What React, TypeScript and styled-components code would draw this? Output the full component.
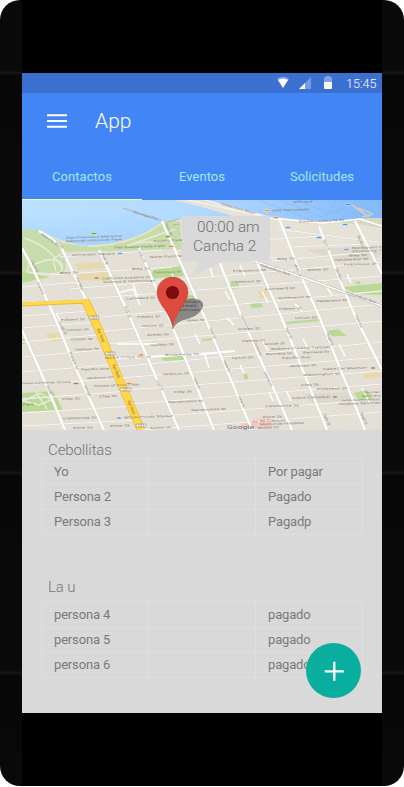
import React from "react";
import styled, { createGlobalStyle } from "styled-components";

const GlobalStyle = createGlobalStyle`
  body { margin: 0; background: #fff; font-family: Roboto, "Noto Sans", sans-serif; }
  * { box-sizing: border-box; }
`;

const Phone = styled.div`
  width: 404px;
  height: 786px;
  padding: 0 22px;
  border-radius: 20px;
  overflow: hidden;
  background: #080808 repeating-linear-gradient(#0a0a0a 0 71px, #151515 72px 74px, #070707 75px, #0a0a0a 200px);
`;

const Face = styled.div`
  height: 100%;
  padding-top: 73px;
  background: #000;
`;

const Screen = styled.main`
  position: relative;
  width: 360px;
  height: 640px;
  background: #d9d9d9;
`;

const StatusBar = styled.div`
  height: 20px;
  display: flex;
  justify-content: flex-end;
  align-items: center;
  padding-right: 5px;
  background: #3b70d1;
  color: #fff;
  font-size: 12.6px;
  font-weight: 300;
  line-height: 20px;
`;

const StatusIcons = styled.svg`
  width: 56px;
  height: 20px;
  margin-right: 13px;
`;

const Clock = styled.span`
  width: 31px;
  padding-top: 1px;
  white-space: nowrap;
`;

const Header = styled.header`
  height: 107px;
  display: flex;
  flex-direction: column;
  justify-content: space-between;
  background: #4285f5;
`;

const TitleBar = styled.div`
  height: 56px;
  display: flex;
  align-items: center;
  gap: 28px;
  padding-left: 25px;
`;

const MenuIcon = styled.svg`
  width: 20px;
  height: 14px;
`;

const AppTitle = styled.h1`
  margin: 0;
  color: #fff;
  font-size: 21px;
  font-weight: 300;
  line-height: 26px;
`;

const Tabs = styled.nav`
  display: grid;
  grid-template-columns: repeat(3, 120px);
`;

const Tab = styled.a<{ $active?: boolean }>`
  height: 47px;
  padding-top: 14px;
  border-bottom: 1px solid ${(p) => (p.$active ? "#f4f9b8" : "transparent")};
  color: #a4e5f8;
  font-size: 13px;
  line-height: 19px;
  letter-spacing: 0.04px;
  text-align: center;
`;

const MapArea = styled.section`
  position: relative;
  height: 230px;
  overflow: hidden;
`;

const MapDrawing = styled.svg`
  display: block;
  width: 360px;
  height: 230px;
`;

const Callout = styled.div`
  position: absolute;
  left: 160px;
  top: 16px;
  width: 88px;
  height: 45px;
  display: flex;
  flex-direction: column;
  color: #6f6f6f;
  font-size: 15.3px;
  font-weight: 300;
  line-height: 19px;
  padding-top: 2px;
  white-space: nowrap;
`;

const CalloutLine = styled.span<{ $indent: number }>`
  padding-left: ${(p) => p.$indent}px;
`;

const Group = styled.section<{ $height: number; $gap: number }>`
  height: ${(p) => p.$height}px;
  padding: 12px 19px 0;

  h2 { margin-bottom: ${(p) => p.$gap}px; }
`;

const GroupTitle = styled.h2`
  margin: 0;
  padding-left: 7px;
  color: #757575;
  font-size: 15px;
  font-weight: 300;
  line-height: 16px;
  letter-spacing: -0.1px;
`;

const Table = styled.div`
  width: 322px;
  border-top: 1px solid #dfdfdf;
  border-left: 1px solid #dfdfdf;
`;

const Row = styled.div`
  display: grid;
  grid-template-columns: repeat(3, 107px);
  height: 25px;
`;

const Cell = styled.div`
  padding-left: 12px;
  border-right: 1px solid #dfdfdf;
  border-bottom: 1px solid #dfdfdf;
  color: #797979;
  font-size: 13px;
  line-height: 25px;
  letter-spacing: -0.16px;
`;

const AddButton = styled.button`
  position: absolute;
  right: 21px;
  bottom: 15px;
  width: 55px;
  height: 55px;
  display: grid;
  place-items: center;
  padding: 0;
  border: 0;
  border-radius: 50%;
  background: #0aae9e;
`;

const avenues = [
  "M0 48L10 66L33 118L53 167L82 230",
  "M17 31Q34 40 40 49L63 98",
  "M0 130L20 175L43 230",
  "M77 50L107 115L157 230",
  "M117 48L147 118L192 230",
  "M140 21L180 111L230 230",
  "M197 61L220 118L270 230",
  "M235 62L258 114L305 230",
  "M257 18L280 78L297 116L343 230",
  "M297 26L317 78L333 116L360 170",
  "M333 21L360 74",
];

const streets = [
  "M38 57L140 50", "M28 75L150 67", "M48 89L360 62", "M60 99L360 76",
  "M0 87L56 82", "M0 116L68 111", "M69 118L360 91", "M0 128L75 122",
  "M75 132L360 104", "M0 142L84 134", "M84 144L360 121", "M0 157L91 149",
  "M94 167L360 142", "M0 172L98 164", "M98 178L360 157", "M0 185L103 178",
  "M104 190L360 171", "M0 199L107 191", "M109 204L360 184", "M0 213L112 206",
  "M115 218L360 199", "M0 226L119 220", "M120 230L360 212", "M255 29L356 42",
  "M196 43L300 36", "M263 47L350 44", "M250 61L360 51", "M214 54L258 58",
];

const shortStreets = [
  "M111 84L116 97", "M150 74L158 90", "M187 65L191 77", "M218 65L223 76",
  "M240 91L246 103", "M273 104L280 111", "M34 113L41 126", "M173 134L178 144",
  "M182 152L187 168", "M240 140L246 151", "M281 139L286 148", "M317 144L323 156",
  "M218 165L222 173", "M247 192L251 201", "M265 192L269 201", "M340 188L347 202",
  "M302 38L308 51", "M302 83L310 95", "M325 74L329 83", "M95 144L136 144",
  "M96 93L111 89L118 105", "M205 118L212 125", "M203 91L208 100",
];

type Label = [text: string, x: number, y: number, width: number, angle?: number];

const labels: Label[] = [
  ["San Francisco Maritime", 44, 38.8, 56],
  ["National Historical Park", 44, 42.2, 56],
  ["Aquatic Park", 131, 42, 29],
  ["The Buena Vista Cafe", 92, 48.5, 51],
  ["Ghirardelli Square", 50, 56, 43],
  ["North Point St", 128, 58, 32],
  ["Bay St", 38, 74, 18],
  ["Bay St", 110, 70, 18],
  ["Francisco St", 132, 73.5, 27],
  ["California Academy of", 80, 79.5, 48],
  ["Science & Technology", 81, 83, 52],
  ["Lombard St", 104, 99.5, 29],
  ["Filbert St", 115, 118, 23],
  ["Filbert St", 39, 121, 24],
  ["Union St", 45, 131, 22],
  ["Green St", 49, 140.5, 22],
  ["Vallejo St", 53, 150.5, 24],
  ["Union St", 120, 127, 22],
  ["Green St", 125, 136, 22],
  ["Vallejo St", 128, 146, 24],
  ["Nick's Crispy Tacos", 83, 159, 46],
  ["Broadway St", 143, 156, 34],
  ["Pacific Ave", 59, 170.5, 28],
  ["Jackson St", 64, 179, 27],
  ["Jackson St", 140, 175, 27],
  ["Haas-Lilienthal House", 0, 184.5, 49],
  ["House of Prime Rib", 72, 187, 45],
  ["Clay St", 40, 200, 18],
  ["Clay St", 77, 197.5, 18],
  ["Clay St", 152, 193, 18],
  ["Sacramento St", 146, 203, 35],
  ["Park", 1, 205.5, 11],
  ["California St", 41, 219.5, 34],
  ["Whole Foods Market", 102, 218.5, 49],
  ["Pine St", 51, 229, 20],
  ["Pine St", 88, 227, 20],
  ["Austin St", 128, 229, 21],
  ["Allen St", 165, 121.5, 18],
  ["Wharf", 271, 3, 20],
  ["USS Pampanito", 250, 11.5, 38],
  ["Embarcadero N St", 277, 22.5, 45],
  ["Northpoint C", 330, 49, 30],
  ["Shopping C", 330, 52.4, 30],
  ["Bay St", 255, 60, 18],
  ["Bay St", 327, 56.4, 18],
  ["Vandewater St", 312, 61, 34],
  ["Francisco St", 322, 65.5, 33],
  ["Francisco St", 211, 72, 33],
  ["Water St", 285, 71, 21],
  ["Chestnut St", 209, 83, 30],
  ["Lombard St", 243, 90, 30],
  ["Greenwich St", 256, 99, 33],
  ["Valparaiso St", 294, 102, 31],
  ["Filbert St", 257, 110, 23],
  ["Union St", 273, 119, 22],
  ["Green St", 216, 130, 22],
  ["Vallejo St", 220, 142, 23],
  ["Glover St", 242, 145, 21],
  ["Robert C Levy Tunnel", 249, 150, 59],
  ["Bernard St", 244, 155, 26],
  ["Bernard St", 281, 153.5, 26],
  ["Lynch St", 210, 159, 21],
  ["Pacific Ave", 260, 159, 28],
  ["Jackson St", 267, 167, 27],
  ["Cable Car Museum", 301, 170, 44],
  ["Washington St", 281, 176, 37],
  ["Clay St", 279, 186, 18],
  ["Pleasant St", 295, 190, 30],
  ["Grace Cathedral", 270, 199, 38],
  ["Intercontinental", 320, 201.5, 38],
  ["Hopkins San Fran", 317, 205, 42],
  ["The Fair", 341, 193.5, 17],
  ["San Franc", 340, 197, 19],
  ["California St", 243, 207.5, 34],
  ["Sacramento St", 169, 211, 35],
  ["Pine St", 241, 218, 19],
  ["St Francis", 238, 222, 25],
  ["Memorial Hospital", 238, 225.3, 44],
  ["Bush St", 236, 228.9, 21],
  ["Gough St", 37, 122, 14, 66],
  ["Franklin St", 47, 153, 18, 68],
  ["Laguna St", 9, 61, 13, 65],
  ["Octavia St", 15, 83, 13, 65],
  ["Gough", 62, 186, 12, 65],
  ["Steiner", 24, 186, 10, 65],
  ["Van Ness", 54, 78, 14, 67],
  ["Polk St", 79, 54, 12, 66],
  ["Polk St", 102, 107, 12, 66],
  ["Larkin St", 116, 50, 14, 66],
  ["Hyde St", 143, 24, 13, 66],
  ["Larkin St", 134, 180, 12, 66],
  ["Hyde St", 171, 178, 12, 66],
  ["Hyde St", 187, 129, 11, 66],
  ["Leavenworth", 218, 115, 18, 66],
  ["Jones St", 232, 143, 14, 66],
  ["Leavenworth", 242, 172, 16, 66],
  ["Hyde St", 201, 161, 12, 66],
  ["Hyde St", 216, 197, 12, 66],
  ["Mason St", 272, 64, 14, 65],
  ["Taylor St", 263, 128, 12, 66],
  ["Powell St", 304, 134, 13, 66],
  ["Mason St", 301, 40, 12, 66],
  ["Stockton", 335, 36, 12, 66],
  ["Stockton", 313, 69, 13, 66],
  ["Taylor St", 301, 214, 13, 66],
  ["Powell St", 338, 213, 13, 66],
  ["Grant Ave", 333, 116, 13, 66],
  ["Columbus Ave", 238, 66, 31, 18],
  ["Columbus Ave", 324, 94, 31, 18],
  ["Marina Blvd", 19, 35, 25, 34],
  ["Fisherman's Wharf", 199, 5, 35, 16],
  ["Municipal Pier", 111, 13, 26, 16],
];

const pois: [x: number, y: number, color: string][] = [
  [72, 33.5, "#68a820"], [145.5, 36.5, "#68a820"], [149, 46.5, "#e68a37"],
  [98, 53.5, "#6b9ddd"], [74.5, 78, "#aa7557"], [119, 155, "#e68a37"],
  [107, 183.5, "#e68a37"], [54, 183.5, "#a47864"], [97, 218, "#6b9ddd"],
  [245, 10.5, "#d99d50"], [254, 17.5, "#ca9361"], [266, 27.5, "#5999df"],
  [323, 24.5, "#5999df"], [297, 37.5, "#5999df"], [324.5, 49.5, "#6b9ddd"],
  [326, 4.5, "#4089e9"], [351, 168, "#b77852"], [313, 197, "#a47864"],
  [233, 222, "#e14646"],
];

const MapView = () => (
  <MapDrawing viewBox="0 0 360 230" aria-label="Mapa">
    <defs>
      <linearGradient id="bay" gradientUnits="userSpaceOnUse" x1="0" y1="0" x2="360" y2="20">
        <stop offset="0" stopColor="#bce1ff" />
        <stop offset="0.45" stopColor="#b3dbff" />
        <stop offset="0.7" stopColor="#a0ccfd" />
        <stop offset="1" stopColor="#82b9f9" />
      </linearGradient>
      <linearGradient id="shade" gradientUnits="userSpaceOnUse" x1="0" y1="12" x2="0" y2="46">
        <stop offset="0" stopColor="#a0cdfd" stopOpacity="0" />
        <stop offset="1" stopColor="#a0cdfd" stopOpacity="0.6" />
      </linearGradient>
      <pattern id="lots" width="5" height="8" patternUnits="userSpaceOnUse" patternTransform="skewX(22)">
        <rect width="5" height="8" fill="#e7e2d9" />
        <path d="M1 0V8M3.5 0V8" stroke="#dfdad0" strokeWidth="0.7" />
      </pattern>
    </defs>
    <rect width="360" height="230" fill="url(#lots)" />
    <path d="M0 29L18 30L40 43L68 47Q110 45 144 20L158 22L160 49L42 52L44 68L40 74L0 73Z" fill="#c6dcaa" />
    <path d="M0 0H360V24L318 21L253 19L178 20L158 19L143 21Q109 45 66 46Q40 43 18 30L0 29Z" fill="url(#bay)" />
    <path d="M0 12H144V20Q109 45 66 46Q40 43 18 30L0 29Z" fill="url(#shade)" />
    <path d="M66 46Q110 46 140 23" fill="none" stroke="#f3e8b4" strokeWidth="1.5" />
    <path d="M151 0L186 0L262 20L360 27V60L160 60V20L214 17L180 7Z" fill="#e6e2d7" />
    <path d="M166 0L256 20M184 0L207 8L240 15" stroke="#fff" strokeWidth="0.7" fill="none" />
    <path d="M237 0L290 20M259 0L299 17L322 8M275 0L306 13L314 0M293 0L300 9" stroke="#74aef0" strokeWidth="0.35" fill="none" />
    <path d="M340 18L360 18V28L336 24L315 22Z" fill="#d5d8bf" />
    <path d="M330 5L347 17M336 8L349 13M340 17L351 14" fill="none" stroke="#cfcec4" strokeWidth="1.7" />
    <path d="M101 8L140 21M145 22L157 19M151 25L158 24" stroke="#b8b9ac" strokeWidth="1.2" fill="none" />
    <path d="M131 70L160 66L162 76L127 79Z M0 83L28 77L0 72Z M160 97L170 95L174 98L163 101Z M207 84L216 82L218 88L210 89Z M228 103L238 101L241 107L229 108Z M321 87L360 83V95L334 94Z M305 131L316 129L325 136L310 136Z M139 158L160 155L162 160L143 161Z M0 193L31 191L41 210L0 212Z M221 174L225 174L226 179L223 180Z M332 193L345 190L352 200L338 202Z M263 122L297 119L298 121L265 124Z M0 139L3 139V144L0 144Z M180 139L190 138V140L180 141Z M333 82L337 81L339 84L334 84Z" fill="#b9d994" />
    <path d="M53 64L80 62L83 68L57 70Z M55 73L85 70L90 81L58 80Z M24 134L39 132L41 141L29 142Z M236 91L245 89L248 97L238 98Z M341 174L356 171L360 177L342 179Z" fill="#e7d8ae" />
    <path d="M224 222L248 217L251 228L215 228Z" fill="#f1c7c2" />
    <path d="M283 50L346 46L360 54L352 60L313 59Z M282 194L330 192L332 203L290 203Z" fill="#ddd8ce" />

    <g fill="none" stroke="#dad6cd" strokeWidth="1.6">
      {streets.map((d) => <path key={d} d={d} />)}
    </g>
    <g fill="none" stroke="#fbfaf7" strokeWidth="0.9">
      {streets.map((d) => <path key={d} d={d} />)}
    </g>
    <path d="M0 49L8 66L24 60Q43 58 40 70Q38 76 5 72L8 63M42 52L31 59L34 71M2 38Q28 46 40 68M105 46L153 29M111 43L150 41M14 192L25 209M1 201L18 193L29 200L17 205Z" fill="none" stroke="#e9eadb" strokeWidth="1.4" />
    <g fill="none" stroke="#fff" strokeWidth="1.4">
      {shortStreets.map((d) => <path key={d} d={d} />)}
    </g>
    <g fill="none" stroke="#d8d4cb" strokeWidth="3.2">
      {avenues.map((d) => <path key={d} d={d} />)}
    </g>
    <g fill="none" stroke="#fff" strokeWidth="2.3">
      {avenues.map((d) => <path key={d} d={d} />)}
      <path d="M232 61L280 77L360 106" stroke="#bebab3" strokeWidth="2.6" />
      <path d="M232 61L280 77L360 106" strokeWidth="1.6" />
      <path d="M84 159L180 154L213 151" strokeWidth="2" />
      <path d="M251 18L300 23L338 19L360 26" strokeWidth="1.5" />
    </g>
    <path d="M0 104.4L65 101.5" fill="none" stroke="#e5b53f" strokeWidth="4" />
    <path d="M0 104L66 101" fill="none" stroke="#ffd84c" strokeWidth="3" />
    <path d="M63 100L76 128L95 174L119 230" fill="none" stroke="#e3ae35" strokeWidth="8.4" />
    <path d="M63 100L76 128L95 174L119 230" fill="none" stroke="#ffd747" strokeWidth="7.3" />

    <g fill="#f5f2e9" stroke="#8d887d" strokeWidth="0.6">
      <rect x="67" y="116" width="10" height="3" rx="1" />
      <rect x="83" y="152" width="10" height="3" rx="1" />
      <rect x="98" y="188" width="11" height="3" rx="1" />
      <rect x="114" y="224" width="10" height="3" rx="1" />
    </g>
    <g fontFamily="Roboto, sans-serif" fontSize="3.7">
      {labels.map(([text, x, y, width, angle]) => (
        <text
          key={`${text}-${x}-${y}`}
          transform={`translate(${x} ${y}) rotate(${angle ?? -2}) scale(1 ${angle ? 1 : 0.76})`}
          textLength={width}
          lengthAdjust="spacingAndGlyphs"
          fill={angle ? "#8d8981" : "#7f7a72"}
        >
          {text}
        </text>
      ))}
    </g>
    <g fill="#94712a" fontFamily="Roboto, sans-serif" fontSize="4.8">
      <text transform="translate(74.5 129) rotate(67)" textLength="15" lengthAdjust="spacingAndGlyphs">Van Ness</text>
      <text transform="translate(90 165) rotate(67)" textLength="15" lengthAdjust="spacingAndGlyphs">Van Ness</text>
      <text transform="translate(105 201) rotate(67)" textLength="15" lengthAdjust="spacingAndGlyphs">Van Ness</text>
    </g>
    <g fill="#68645c" fontFamily="Roboto, sans-serif" fontSize="2.8">
      <text x="69" y="118.5" textLength="6">101</text>
      <text x="85" y="154.5" textLength="6">101</text>
      <text x="100.5" y="190.5" textLength="6">101</text>
      <text x="116" y="226.5" textLength="6">101</text>
    </g>
    <g>
      {pois.map(([x, y, color]) => <ellipse key={`${x}-${y}`} cx={x} cy={y} rx="2.8" ry="1.2" fill={color} stroke="#f8f6ef" strokeWidth="0.6" />)}
      <path d="M231 222H235M233 221V223" stroke="#fff" strokeWidth="0.6" />
    </g>
    <text x="205" y="228.5" fill="#777" fontFamily="Roboto, sans-serif" fontSize="5.5" textLength="27" lengthAdjust="spacingAndGlyphs">Google</text>

    <path d="M160 16H248V61H203L170 76L177 61H160Z" fill="#d9d9d9" />

    <path d="M151 128C154 122 153 110 159 103C166 96 180 98 181 104C182 112 171 118 162 120C157 121 153 125 151 128Z" fill="#4c4c4c" fillOpacity="0.6" />
    <g fill="#30405a" fillOpacity="0.8" fontFamily="Roboto, sans-serif" fontSize="3.2">
      <text x="162" y="103" textLength="16" lengthAdjust="spacingAndGlyphs">ssian</text>
      <text x="158" y="106.8" textLength="16" lengthAdjust="spacingAndGlyphs">treet</text>
      <text x="157" y="110.6" textLength="21" lengthAdjust="spacingAndGlyphs">servoir</text>
    </g>
    <path d="M151 129C149 117 144 112 139 104C136 99 135 96 135 92.5A15.5 15.5 0 0 1 166 92.5C166 97 164 101 161 105C156 112 152 119 151 129Z" fill="#dc4b3e" stroke="#b63d33" strokeWidth="0.5" />
    <circle cx="150.5" cy="92.5" r="6.6" fill="#7b0b0c" />
  </MapDrawing>
);

const groups = [
  {
    title: "Cebollitas", height: 137, gap: 0,
    rows: [["Yo", "Por pagar"], ["Persona 2", "Pagado"], ["Persona 3", "Pagadp"]],
  },
  {
    title: "La u", height: 146, gap: 6,
    rows: [["persona 4", "pagado"], ["persona 5", "pagado"], ["persona 6", "pagado"]],
  },
];

export default function App() {
  return (
    <>
      <GlobalStyle />
      <Phone>
        <Face>
          <Screen>
            <StatusBar>
              <StatusIcons viewBox="0 0 56 20" fill="#fff">
                <path d="M0 5.5Q6 2 12 5.5L6 15Z" opacity="0.35" />
                <path d="M1 7Q6 4 11 7L6 15Z" />
                <path d="M34 4V16H22Z" opacity="0.3" />
                <path d="M28 10V16H22Z" />
                <path d="M47 5Q47 4 48 4H49V3H53V4H54Q55 4 55 5V9H47Z" opacity="0.35" />
                <path d="M47 9H55V15Q55 16 54 16H48Q47 16 47 15Z" />
              </StatusIcons>
              <Clock>15:45</Clock>
            </StatusBar>
            <Header>
              <TitleBar>
                <MenuIcon viewBox="0 0 20 14" fill="#fff">
                  <path d="M0 0.2H20V2.2H0ZM0 6H20V8H0ZM0 11.8H20V13.8H0Z" />
                </MenuIcon>
                <AppTitle>App</AppTitle>
              </TitleBar>
              <Tabs>
                <Tab $active>Contactos</Tab>
                <Tab>Eventos</Tab>
                <Tab>Solicitudes</Tab>
              </Tabs>
            </Header>
            <MapArea>
              <MapView />
              <Callout>
                <CalloutLine $indent={15}>00:00 am</CalloutLine>
                <CalloutLine $indent={11}>Cancha 2</CalloutLine>
              </Callout>
            </MapArea>
            {groups.map((group) => (
              <Group key={group.title} $height={group.height} $gap={group.gap}>
                <GroupTitle>{group.title}</GroupTitle>
                <Table>
                  {group.rows.map(([name, status]) => (
                    <Row key={name}>
                      <Cell>{name}</Cell>
                      <Cell />
                      <Cell>{status}</Cell>
                    </Row>
                  ))}
                </Table>
              </Group>
            ))}
            <AddButton aria-label="Agregar">
              <svg width="20" height="20" viewBox="0 0 20 20" fill="none" stroke="#fff" strokeWidth="2.3">
                <path d="M10.3 0.8V19.8M0.8 10.3H19.8" />
              </svg>
            </AddButton>
          </Screen>
        </Face>
      </Phone>
    </>
  );
}
